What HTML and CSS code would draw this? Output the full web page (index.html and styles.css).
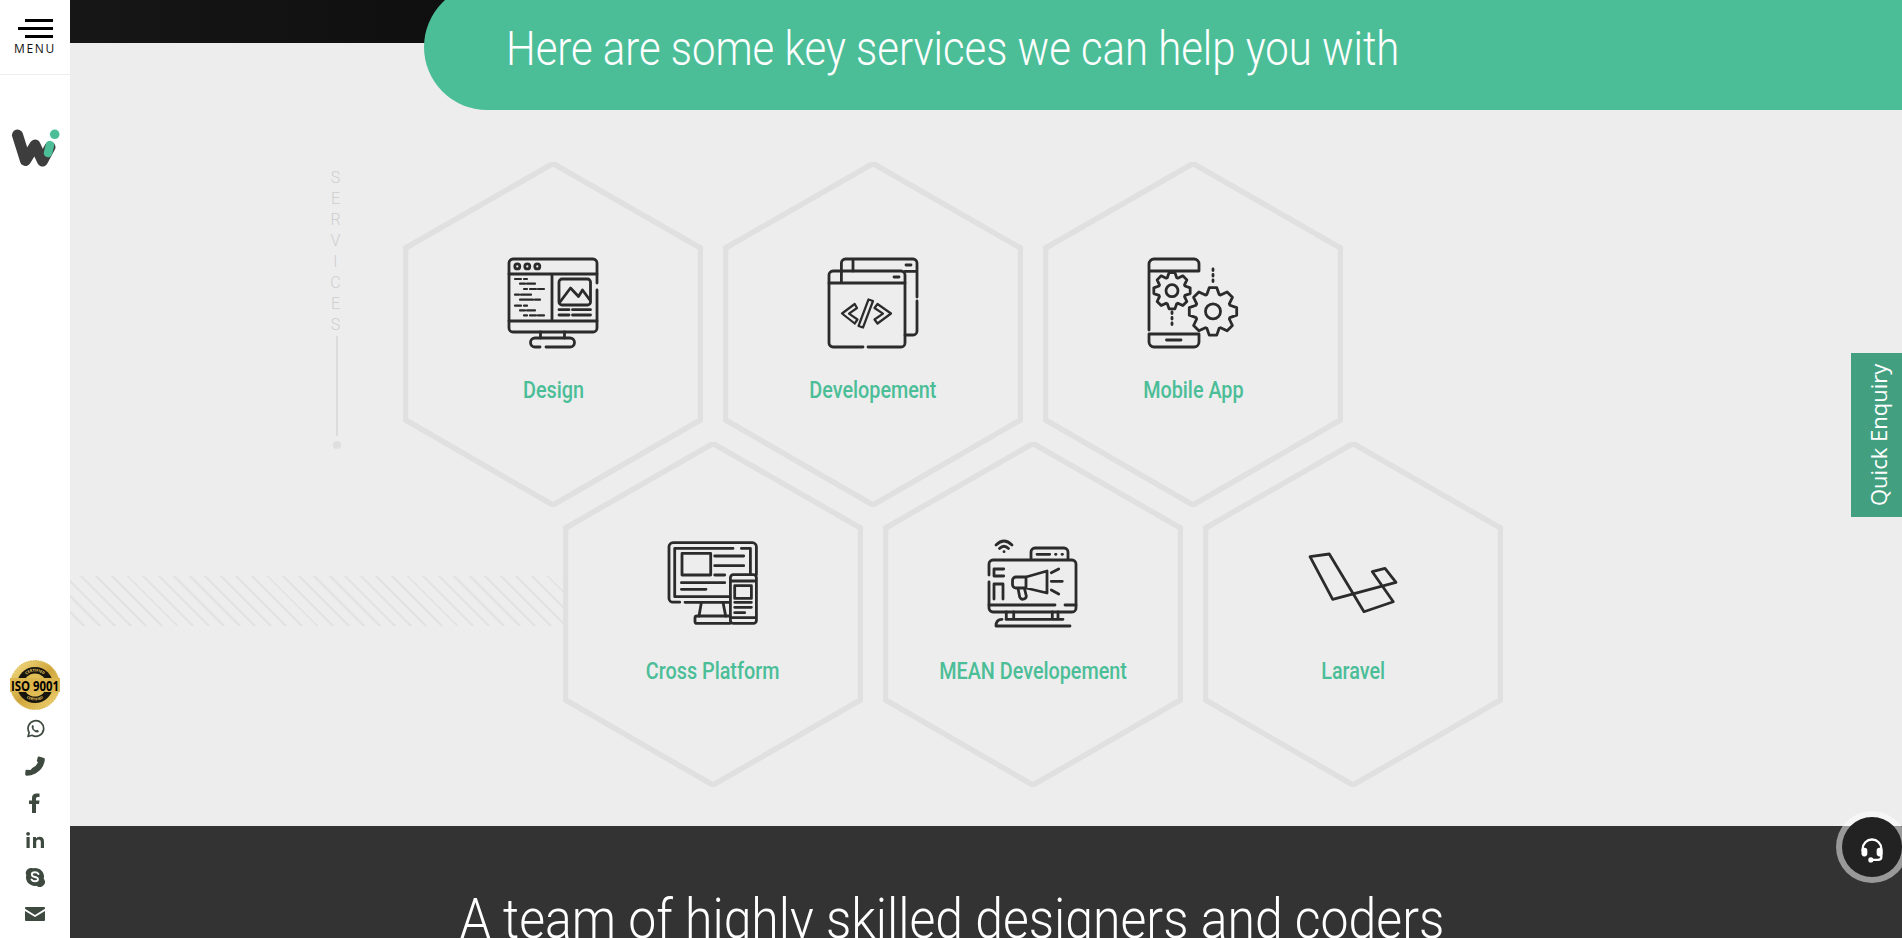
FILE: index.html
```html
<!DOCTYPE html>
<html lang="en">
<head>
  <meta charset="UTF-8" />
  <title>Services</title>
  <link rel="stylesheet" href="styles.css">
</head>
<body>
  <aside class="sidebar">
    <div class="menu-btn">
      <span class="bar bar-short"></span>
      <span class="bar bar-long"></span>
      <span class="bar bar-short"></span>
      <span class="menu-text">MENU</span>
    </div>
    <svg class="logo" viewBox="0 0 48 44" width="48" height="44">
      <path d="M5.500 6 L13.500 31.500 L23 16 L30.500 32 L38 18" fill="none" stroke="#3d3d3d" stroke-width="11" stroke-linecap="round" stroke-linejoin="round"/>
      <path d="M38 16 L36 24" fill="none" stroke="#4bbe98" stroke-width="8.500" stroke-linecap="round"/>
      <circle cx="42.700" cy="5.300" r="4.800" fill="#4bbe98"/>
    </svg>
    <div class="side-bottom">
      <svg class="iso" viewBox="0 0 52 50" width="52" height="50">
        <defs>
          <linearGradient id="gold" x1="0" y1="0" x2="1" y2="1">
            <stop offset="0" stop-color="#f6e08a"/>
            <stop offset="0.5" stop-color="#cfa63c"/>
            <stop offset="1" stop-color="#f2d675"/>
          </linearGradient>
          <path id="arc-top" d="M12.500 25 A13.500 13.500 0 0 1 39.500 25"/>
          <path id="arc-bottom" d="M10.500 25 A15.500 15.500 0 0 0 41.500 25"/>
        </defs>
        <circle cx="26" cy="25" r="24.500" fill="url(#gold)" stroke="#d9b64d" stroke-dasharray="1.500 1"/>
        <circle cx="26" cy="25" r="18" fill="#16140d"/>
        <circle cx="26" cy="25" r="11.500" fill="#e0bd55"/>
        <rect x="1" y="18" width="50" height="14" fill="#dcb64c"/>
        <text class="iso-small"><textPath href="#arc-top" startOffset="50%" text-anchor="middle">CERTIFIED</textPath></text>
        <text class="iso-small"><textPath href="#arc-bottom" startOffset="50%" text-anchor="middle">CERTIFIED</textPath></text>
        <text class="iso-text" x="26" y="30.500" text-anchor="middle" textLength="48" lengthAdjust="spacingAndGlyphs">ISO 9001</text>
      </svg>
      <svg class="soc" viewBox="0 0 20 20" width="20" height="20"><path d="M3 17.500 L4.200 13.600 A7.800 7.800 0 1 1 7 16.300 Z" fill="none" stroke="#3e4a40" stroke-width="1.700" stroke-linejoin="round"/><path d="M7 6.500 Q6 8 7.500 10.500 Q9.500 13 12 13.500 Q13.500 13.500 14 12 L12 10.800 L11 11.600 Q9 10.800 8.300 8.800 L9 8 L8 6 Z" fill="#3e4a40"/></svg>
      <svg class="soc" viewBox="0 0 20 20" width="20" height="20"><path d="M14 0.500 L19 2 Q20 2.500 19.800 4 Q18.500 13 10.500 17.500 Q5.500 20 1.500 19.800 Q0.300 19.500 0.200 18.500 L0.500 14.500 Q0.800 13.800 1.500 13.800 L5.500 14 L7.200 12 Q11.500 10 13 6.500 L11.800 5 L12.800 1 Q13.200 0.300 14 0.500 Z" fill="#3e4a40"/></svg>
      <svg class="soc" viewBox="0 0 20 20" width="20" height="20"><path d="M7 20 V11 H4 V7.500 H7 V5 Q7 0.500 11.500 0.500 H14.500 V4 H12.500 Q11 4 11 5.500 V7.500 H14.500 L14 11 H11 V20 Z" fill="#3e4a40"/></svg>
      <svg class="soc" viewBox="0 0 20 20" width="20" height="20"><path d="M1.500 7 H4.700 V18 H1.500 Z M8 7 H11 V8.500 Q12 6.700 14.500 6.700 Q19 6.700 19 11.500 V18 H15.800 V12.300 Q15.800 9.500 13.700 9.500 Q11.200 9.500 11.200 12.300 V18 H8 Z" fill="#3e4a40"/><circle cx="3.100" cy="3.800" r="1.900" fill="#3e4a40"/></svg>
      <svg class="soc" viewBox="0 0 20 20" width="20" height="20"><path d="M5.500 1 A5 5 0 0 0 1.300 8.200 A8.500 8.500 0 0 0 11.500 18.700 A5 5 0 0 0 18.700 11.800 A8.500 8.500 0 0 0 8.500 1.300 A5 5 0 0 0 5.500 1 Z" fill="#3e4a40"/><path d="M13.500 7 Q12.500 5.300 10 5.300 Q6.800 5.300 6.800 7.500 Q6.800 9.300 10 10 Q13 10.700 13 12.300 Q13 14.300 10 14.300 Q7.500 14.300 6.500 12.500" fill="none" stroke="#fff" stroke-width="1.900" stroke-linecap="round"/></svg>
      <svg class="soc" viewBox="0 0 20 20" width="20" height="20"><path d="M1 3 H19 Q20 3 20 4 V4.800 L10 11 L0 4.800 V4 Q0 3 1 3 Z M0 7 L10 13 L20 7 V16 Q20 17 19 17 H1 Q0 17 0 16 Z" fill="#3e4a40"/></svg>
    </div>
  </aside>

  <main class="main">
    <div class="top-strip"></div>
    <div class="stripes"></div>

    <section class="services">
      <h2 class="pill"><span class="pill-text">Here are some key services we can help you with</span></h2>

      <div class="services-body">
        <div class="rail">
          <span class="rail-text">SERVICES</span>
          <span class="rail-line"></span>
          <span class="rail-dot"></span>
        </div>

        <div class="hex-grid">
          <div class="hex-row">
            <div class="hex">
              <svg class="hex-shape" viewBox="0 0 300 345"><polygon points="150,1.500 297.500,86 297.500,258 150,343 2.500,258 2.500,86"/></svg>
              <svg class="hex-icon" viewBox="0 0 90 90" width="90" height="90">
                <path d="M89 25 V5 a4 4 0 0 0 -4 -4 H5 a4 4 0 0 0 -4 4 V70 a4 4 0 0 0 4 4 H85 a4 4 0 0 0 4 -4 V32"/>
                <path d="M1 16 H89 M1 63 H89 M44 16 V63"/>
                <circle cx="9.300" cy="8.400" r="2.500"/><circle cx="19.300" cy="8.400" r="2.500"/><circle cx="29.300" cy="8.400" r="2.500"/>
                <rect x="51" y="21" width="31.500" height="26" rx="3"/>
                <path d="M52 44 L62.500 30 L70.500 38.500 L74.500 32 L81.500 41.500"/>
                <path d="M51 51.700 H61 M64.500 51.700 H82.500 M51 57 H61 M64.500 57 H82.500"/>
                <path class="thin" d="M7 21 H13 M16 21 H19 M12 25.700 H17 M19 25.700 H27 M16 31 H19 M22 31 H28 M30 31 H36 M7 36.700 H11 M13 36.700 H23 M12 41.700 H25 M27 41.700 H32 M7 47.700 H13 M16 47.700 H19 M12 52.400 H17 M19 52.400 H27 M16 57.400 H19 M22 57.400 H28 M30 57.400 H36"/>
                <path d="M32.500 74 V80 M56.500 74 V80"/>
                <path d="M32 89 H27 a4.500 4.500 0 0 1 0 -9 H62 a4.500 4.500 0 0 1 0 9 H38"/>
              </svg>
              <span class="hex-label">Design</span>
            </div>
            <div class="hex">
              <svg class="hex-shape" viewBox="0 0 300 345"><polygon points="150,1.500 297.500,86 297.500,258 150,343 2.500,258 2.500,86"/></svg>
              <svg class="hex-icon" viewBox="0 0 90 90" width="90" height="90">
                <path d="M35 89 H5 a4 4 0 0 1 -4 -4 V17 a4 4 0 0 1 4 -4 H73 a4 4 0 0 1 4 4 V85 a4 4 0 0 1 -4 4 H40"/>
                <path d="M1 25 H77 M13.400 13 V25"/>
                <path d="M13.400 13 V5 a4 4 0 0 1 4 -4 H85 a4 4 0 0 1 4 4 V39 M89 43 V73 a4 4 0 0 1 -4 4 H77 M77 13.400 H89 M25 1 V13"/>
                <path d="M78 7 H83 M66 19 H71"/>
                <path class="thin" d="M14 55.500 L26.700 46 L29 50 L21 55.700 L29.500 61.500 L26.700 65.500 Z"/>
                <path class="thin" d="M40.500 41.500 L45 43 L35 69.500 L30.500 68 Z"/>
                <path class="thin" d="M63 55.500 L49.500 46 L46.500 50 L55 55.700 L46.500 61.500 L49.500 65.500 Z"/>
              </svg>
              <span class="hex-label">Developement</span>
            </div>
            <div class="hex">
              <svg class="hex-shape" viewBox="0 0 300 345"><polygon points="150,1.500 297.500,86 297.500,258 150,343 2.500,258 2.500,86"/></svg>
              <svg class="hex-icon" viewBox="0 0 90 90" width="90" height="90">
                <defs>
                  <path id="gear" vector-effect="non-scaling-stroke" d="M-5.130 -14.100 L-3.130 -19.750 L3.130 -19.750 L5.130 -14.100 L6.340 -13.590 L11.760 -16.180 L16.180 -11.760 L13.590 -6.340 L14.100 -5.130 L19.750 -3.130 L19.750 3.130 L14.100 5.130 L13.590 6.340 L16.180 11.760 L11.760 16.180 L6.340 13.590 L5.130 14.100 L3.130 19.750 L-3.130 19.750 L-5.130 14.100 L-6.340 13.590 L-11.760 16.180 L-16.180 11.760 L-13.590 6.340 L-14.100 5.130 L-19.750 3.130 L-19.750 -3.130 L-14.100 -5.130 L-13.590 -6.340 L-16.180 -11.760 L-11.760 -16.180 L-6.340 -13.590 Z"/>
                </defs>
                <path d="M1 72 V6 a5 5 0 0 1 5 -5 H46 a5 5 0 0 1 5 5 V13 H1"/>
                <path d="M1 76 H51 V84 a5 5 0 0 1 -5 5 H6 a5 5 0 0 1 -5 -5 Z M18.500 82 H33"/>
                <use href="#gear" transform="translate(24 32.700) scale(0.920)"/>
                <circle cx="24" cy="32.700" r="6"/>
                <use href="#gear" transform="translate(65 53.400) scale(1.200)"/>
                <circle cx="65" cy="53.400" r="7.500"/>
                <path class="dots" d="M65 11 V26 M24 54 V70"/>
              </svg>
              <span class="hex-label">Mobile App</span>
            </div>
          </div>

          <div class="hex-row hex-row-shift">
            <div class="hex">
              <svg class="hex-shape" viewBox="0 0 300 345"><polygon points="150,1.500 297.500,86 297.500,258 150,343 2.500,258 2.500,86"/></svg>
              <svg class="hex-icon" viewBox="0 0 90 90" width="90" height="90">
                <g transform="translate(0 2.700)">
                  <path d="M88.400 33 V5 a4 4 0 0 0 -4 -4 H5 a4 4 0 0 0 -4 4 V56.500 a4 4 0 0 0 4 4 H11.700 M17 60.600 H61.700"/>
                  <path d="M65 6.700 H6.700 V55 H62 M73.400 6.700 H82.400 V33"/>
                  <rect x="14" y="11.700" width="28.700" height="21.600"/>
                  <path d="M46.700 14.300 H75.700 M46.700 24 H75.700 M46.700 33.300 H56.700 M13.400 41 H56.700 M13.400 47.600 H38"/>
                  <path d="M33.400 60.600 L31 74.500 M55 60.600 L57.700 74.500"/>
                  <path d="M62 81.700 H29 a2 2 0 0 1 -2 -2 V76.300 a2 2 0 0 1 2 -2 H62"/>
                  <path d="M62.400 36 a3 3 0 0 1 3 -3 H85.400 a3 3 0 0 1 3 3 V78.700 a3 3 0 0 1 -3 3 H65.400 a3 3 0 0 1 -3 -3 Z M62.400 39.300 H88.400 M62.400 76 H88.400"/>
                  <rect x="66.700" y="44" width="16.700" height="12.700"/>
                  <path d="M66.700 60.600 H83.400 M66.700 65.600 H83.400 M66.700 71 H76.700"/>
                </g>
              </svg>
              <span class="hex-label">Cross Platform</span>
            </div>
            <div class="hex">
              <svg class="hex-shape" viewBox="0 0 300 345"><polygon points="150,1.500 297.500,86 297.500,258 150,343 2.500,258 2.500,86"/></svg>
              <svg class="hex-icon" viewBox="0 0 90 90" width="90" height="90">
                <g transform="translate(0 -1)">
                  <path d="M1 37 V26 a4 4 0 0 1 4 -4 H84 a4 4 0 0 1 4 4 V70 a4 4 0 0 1 -4 4 H5 a4 4 0 0 1 -4 -4 V44"/>
                  <path d="M1 67 H67 M77 67 H88"/>
                  <path d="M18.300 74 V81 M25.700 74 V81 M64.300 74 V81 M70 74 V81 M18 81.300 H75"/>
                  <path d="M8 88 q0 -6.700 6 -6.700 M8 88 H82"/>
                  <path d="M43 21 V14 a4 4 0 0 1 4 -4 H76 a4 4 0 0 1 4 4 V21 M49 16.300 H61.700 M67.500 16.300 H68 M74 16.300 H74.500"/>
                  <path d="M8 7 Q16 -1 24 7 M11.500 10.500 Q16 6 20.500 10.500 M16 13.700 H16.100"/>
                  <path d="M15.700 31 H6 V38 H15.700 M6 61 V46 H15 V61"/>
                  <path d="M38 39 L59 33 V55 L38 50 H28 a3.500 3.500 0 0 1 -3.500 -3.500 V42.500 a3.500 3.500 0 0 1 3.500 -3.500 Z M38 39 V50"/>
                  <path d="M30 50.300 L31.700 59 Q33 62 36 61 Q38.500 60 38.300 58 L36.700 51.300"/>
                  <path d="M63.300 34.700 L70.700 31 M63.300 43.300 H74.300 M63.300 52 L70.700 56"/>
                </g>
              </svg>
              <span class="hex-label">MEAN Developement</span>
            </div>
            <div class="hex">
              <svg class="hex-shape" viewBox="0 0 300 345"><polygon points="150,1.500 297.500,86 297.500,258 150,343 2.500,258 2.500,86"/></svg>
              <svg class="hex-icon" viewBox="0 0 90 90" width="90" height="90">
                <path d="M24.700 60.300 L2 17.700 L21.300 15 L56 72.700 L85.300 62.700 L64.300 32.700 L77 29.300 L88 43.300 Z"/>
              </svg>
              <span class="hex-label">Laravel</span>
            </div>
          </div>
        </div>
      </div>
    </section>

    <section class="team">
      <h2 class="team-title">A team of highly skilled designers and coders</h2>
    </section>
  </main>

  <a class="enquiry">Quick Enquiry</a>

  <div class="chat-btn">
    <svg viewBox="0 0 24 24" width="28" height="28">
      <path d="M4 13 V11 a8 8 0 0 1 16 0 V18" fill="none" stroke="#fff" stroke-width="2"/>
      <rect x="3" y="10" width="5" height="7.500" rx="2.400" fill="#fff"/>
      <rect x="16" y="10" width="5" height="7.500" rx="2.400" fill="#fff"/>
      <path d="M20 18 Q20 20.500 17 20.500 H12" fill="none" stroke="#fff" stroke-width="2"/>
      <circle cx="11" cy="20.500" r="2.200" fill="#fff"/>
    </svg>
  </div>
</body>
</html>
```

FILE: styles.css
```css
html, body {
  height: 100%;
}

body {
  margin: 0;
  height: 938px;
  overflow: hidden;
  display: flex;
  position: relative;
  font-family: "Roboto", "Liberation Sans", sans-serif;
  background: #ededed;
}

/* linke Leiste */
.sidebar {
  width: 70px;
  flex-shrink: 0;
  background: #fff;
  display: flex;
  flex-direction: column;
  align-items: center;
}

.menu-btn {
  width: 100%;
  height: 75px;
  box-sizing: border-box;
  border-bottom: 1px solid #eee;
  padding-top: 19px;
  display: flex;
  flex-direction: column;
  align-items: flex-end;
  gap: 5px;
}

.bar {
  display: block;
  height: 3px;
  background: #000;
  margin-right: 17px;
}

.bar-short { width: 28px; }
.bar-long { width: 35px; }

.menu-text {
  align-self: center;
  font-family: "Open Sans", sans-serif;
  font-size: 12px;
  line-height: 14px;
  letter-spacing: 1.700px;
  color: #111;
  margin-top: -1px;
}

.logo {
  margin-top: 54px;
  margin-left: 2px;
  overflow: visible;
}

.side-bottom {
  margin-top: auto;
  padding-bottom: 14px;
  display: flex;
  flex-direction: column;
  align-items: center;
}

.iso {
  margin-bottom: 9px;
  overflow: visible;
}

.iso-text {
  font-family: "Open Sans", sans-serif;
  font-size: 14px;
  font-weight: 700;
  fill: #000;
}

.iso-small {
  font-family: "Open Sans", sans-serif;
  font-size: 3.800px;
  font-weight: 700;
  fill: #e8c860;
}

.iso-small + .iso-small {
  font-size: 3.600px;
}

.soc {
  margin-bottom: 17px;
}

.soc:last-child {
  margin-bottom: 0;
}

/* Hauptbereich */
.main {
  flex: 1;
  position: relative;
  display: flex;
  flex-direction: column;
  min-width: 0;
}

.top-strip {
  position: absolute;
  top: 0;
  left: 0;
  width: 400px;
  height: 43px;
  background: linear-gradient(90deg, #161616, #0f0f0f);
}

.stripes {
  position: absolute;
  left: 0;
  top: 576px;
  width: 500px;
  height: 50px;
  background: repeating-linear-gradient(45deg, transparent 0, transparent 9px, #e2e2e2 9px, #e2e2e2 11px);
}

.services {
  height: 826px;
  flex-shrink: 0;
  position: relative;
}

.pill {
  margin: -16px 0 0 354px;
  height: 126px;
  box-sizing: border-box;
  padding: 16px 0 0 82px;
  border-radius: 63px 0 0 63px;
  background: #4bbe98;
  color: #fff;
  font-weight: 400;
  font-size: 48px;
  line-height: 98px;
  white-space: nowrap;
}

/* Abel gibt es hier nicht, Roboto schmaler gezogen */
.pill-text {
  display: inline-block;
  font-weight: 300;
  transform: scaleX(0.872);
  transform-origin: left center;
}

.services-body {
  display: flex;
  padding-left: 257px;
}

.rail {
  width: 76px;
  flex-shrink: 0;
  padding-top: 58px;
  display: flex;
  flex-direction: column;
  align-items: flex-start;
}

.rail-text {
  writing-mode: vertical-rl;
  text-orientation: upright;
  font-size: 16px;
  font-weight: 300;
  letter-spacing: 2px;
  color: #cfcfcf;
  width: 16px;
  line-height: 16px;
}

.rail-line {
  display: block;
  width: 2px;
  height: 100px;
  background: #dcdcdc;
  margin: 0 0 0 9px;
}

.rail-dot {
  display: block;
  width: 8px;
  height: 8px;
  border-radius: 50%;
  background: #dfdfdf;
  margin: 5px 0 0 6px;
}

.hex-grid {
  padding-top: 52px;
}

.hex-row {
  display: flex;
  gap: 20px;
}

.hex-row-shift {
  margin: -65px 0 0 160px;
}

.hex-row-shift .hex {
  padding-top: 97px;
}

.hex {
  width: 300px;
  height: 345px;
  position: relative;
  display: flex;
  flex-direction: column;
  align-items: center;
  padding-top: 96px;
  box-sizing: border-box;
}

.hex-shape {
  position: absolute;
  inset: 0;
  width: 300px;
  height: 345px;
}

.hex-shape polygon {
  fill: #ededed;
  stroke: #e0e0e0;
  stroke-width: 5.500;
}

.hex-icon {
  position: relative;
  overflow: visible;
  fill: none;
  stroke: #2b2b2b;
  stroke-width: 2.800;
  stroke-linecap: round;
  stroke-linejoin: round;
}

.hex-icon .thin {
  stroke-width: 2.200;
}

.hex-icon .dots {
  stroke-dasharray: 1.500 4;
}

.hex-label {
  position: relative;
  margin-top: 29px;
  font-size: 23px;
  font-weight: 500;
  line-height: 28px;
  color: #4bbe98;
  white-space: nowrap;
  transform: scaleX(0.86);
}

.team {
  flex: 1;
  background: #333;
  overflow: hidden;
  text-align: center;
}

.team-title {
  margin: 58px 0 0 -68px;
  font-size: 56px;
  font-weight: 300;
  line-height: 70px;
  color: #fff;
  white-space: nowrap;
  transform: scaleX(0.892);
}

.enquiry {
  position: absolute;
  top: 353px;
  right: 0;
  width: 51px;
  height: 164px;
  box-sizing: border-box;
  padding-right: 3px;
  display: flex;
  align-items: center;
  justify-content: center;
  writing-mode: vertical-rl;
  transform: rotate(180deg);
  background: #429f7f;
  color: #fff;
  font-family: "Open Sans", sans-serif;
  font-size: 22px;
}

.chat-btn {
  position: absolute;
  left: 1842px;
  top: 817px;
  width: 60px;
  height: 60px;
  box-sizing: border-box;
  padding-top: 6px;
  border-radius: 50%;
  background: #222;
  box-shadow: 0 0 0 6px rgba(255, 255, 255, 0.5);
  display: flex;
  align-items: center;
  justify-content: center;
}
```
